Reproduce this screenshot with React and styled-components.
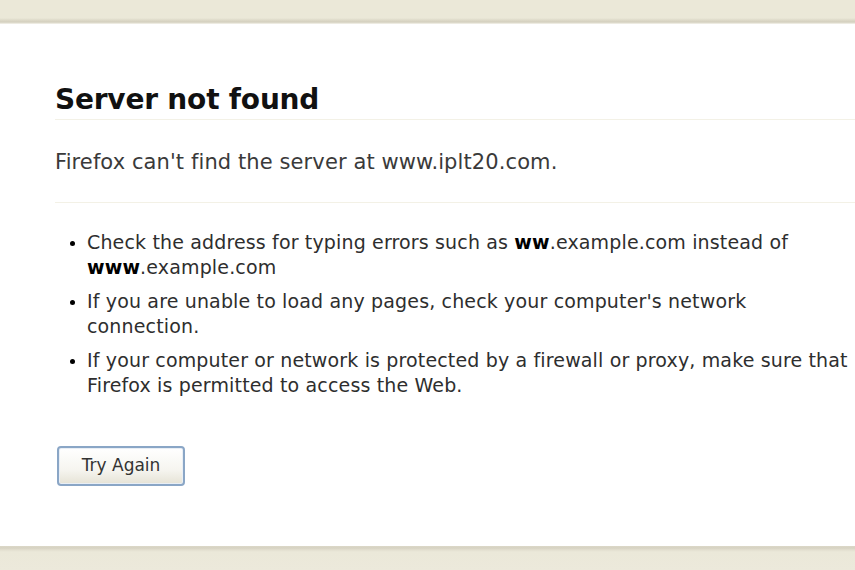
import React from 'react'
import styled, { createGlobalStyle } from 'styled-components'

const GlobalStyle = createGlobalStyle`
  html, body {
    margin: 0;
    padding: 0;
    background: #fff;
    overflow: hidden;
  }
`

const Page = styled.div`
  display: flex;
  flex-direction: column;
  height: 570px;
  width: 855px;
  overflow: hidden;
  font-family: 'DejaVu Sans', Tahoma, sans-serif;
`

const Bar = styled.div`
  height: 24px;
  flex: none;
  background: ${(p) =>
    p.bottom
      ? 'linear-gradient(to bottom, #dcd8c8 0px, #d6d2c2 2px, #e3dfd0 4px, #ebe8d9 6px, #ece9db 100%)'
      : 'linear-gradient(to bottom, #ebe8d8 0px, #ebe8d8 18px, #dedac9 20px, #d3cfbe 22px, #e4e1d4 23px, #f6f5ef 24px)'};
`

const Content = styled.div`
  flex: 1;
  padding: 60px 0 0 55px;
`

const Title = styled.h1`
  margin: 0;
  padding-bottom: 3px;
  font-size: 28px;
  font-weight: bold;
  color: #111;
  line-height: 32px;
  letter-spacing: -0.2px;
  border-bottom: 1px solid #f3f1e6;
`

const ShortDesc = styled.p`
  margin: 0;
  padding: 29px 0 27px;
  font-size: 21px;
  line-height: 26px;
  letter-spacing: 0.1px;
  color: #3a3a3a;
  border-bottom: 1px solid #f3f1e6;
`

const List = styled.ul`
  margin: 0;
  padding: 27px 0 0 32px;
  list-style: disc;
  color: #2e2e2e;
`

const Item = styled.li`
  font-size: 19px;
  line-height: 25px;
  margin-bottom: 9px;
  white-space: nowrap;
  letter-spacing: 0.15px;

  &::marker {
    color: #000;
    font-size: 16px;
  }

  b {
    color: #000;
  }
`

const RetryButton = styled.button`
  margin: 39px 0 0 2px;
  width: 128px;
  height: 40px;
  border: 2px solid #8aa6c6;
  border-radius: 4px;
  background: linear-gradient(to bottom, #ffffff 0%, #f6f5f0 60%, #e6e3d6 100%);
  font-family: 'DejaVu Sans', Tahoma, sans-serif;
  font-size: 17px;
  color: #333;
  padding: 0 0 2px;
  box-shadow: inset 0 0 0 1px #e8eef5;
`

export default function App() {
  return (
    <Page>
      <GlobalStyle />
      <Bar />
      <Content>
        <Title>Server not found</Title>
        <ShortDesc>Firefox can&apos;t find the server at www.iplt20.com.</ShortDesc>
        <List>
          <Item>
            Check the address for typing errors such as <b>ww</b>.example.com instead of
            <br />
            <b>www</b>.example.com
          </Item>
          <Item>
            If you are unable to load any pages, check your computer&apos;s network
            <br />
            connection.
          </Item>
          <Item>
            If your computer or network is protected by a firewall or proxy, make sure that
            <br />
            Firefox is permitted to access the Web.
          </Item>
        </List>
        <RetryButton>Try Again</RetryButton>
      </Content>
      <Bar bottom />
    </Page>
  )
}
